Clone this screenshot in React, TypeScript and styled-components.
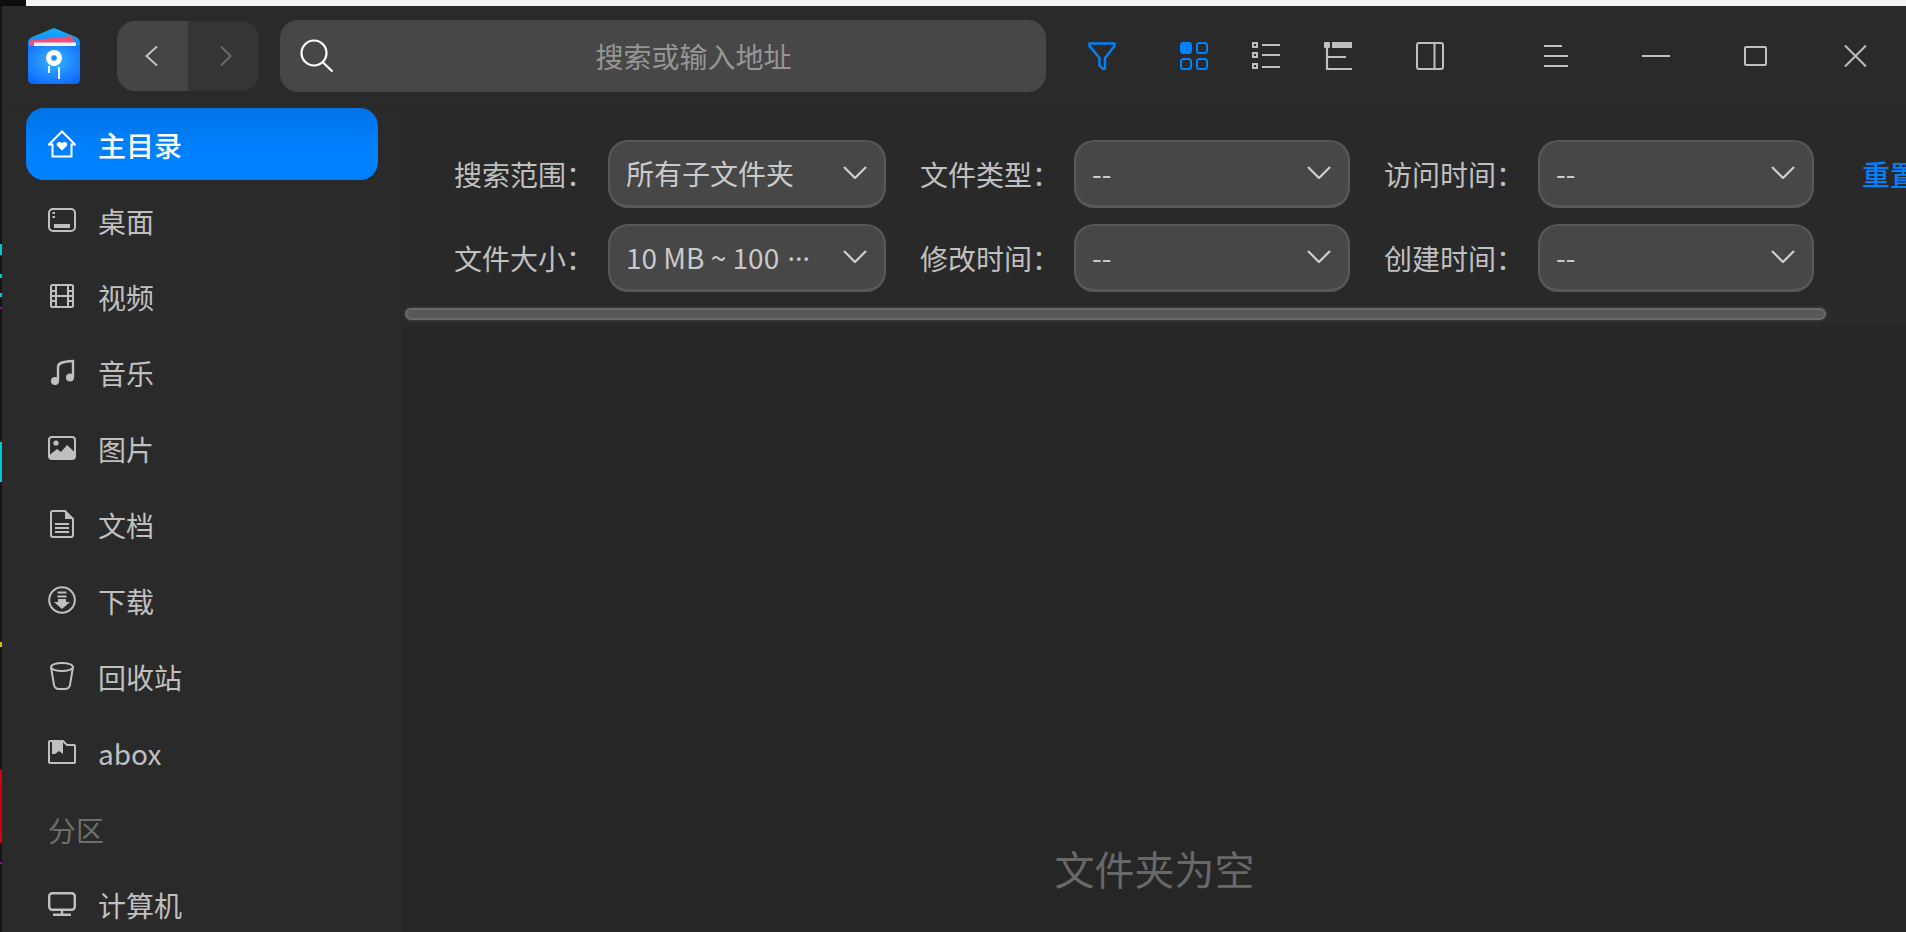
import React from "react";
import styled, { createGlobalStyle } from "styled-components";

const GlobalStyle = createGlobalStyle`
  html, body {
    margin: 0;
    padding: 0;
    background: #111;
  }
  * {
    box-sizing: border-box;
  }
`;

const FONT = `"Noto Sans CJK SC", "Noto Sans", sans-serif`;
const BLUE = "#0081ff";
const GREY = "#c0c0c0";

const LogoIcon = () => (
  <svg width="52" height="56" viewBox="0 0 52 56">
    <defs>
      <linearGradient id="logoTop" x1="0" y1="0" x2="0" y2="1">
        <stop offset="0" stopColor="#12b0f5" />
        <stop offset="1" stopColor="#1a7fff" />
      </linearGradient>
      <radialGradient id="logoBody" cx="0.5" cy="0.4" r="0.75">
        <stop offset="0" stopColor="#37b4ff" />
        <stop offset="1" stopColor="#0a62fb" />
      </radialGradient>
    </defs>
    <path d="M26 0 L48 9 Q52 11 52 15 V20 H0 V15 Q0 11 4 9 Z" fill="url(#logoTop)" />
    <path d="M1 14 Q2 12 5 12 L44 8 L47 18 H1 Z" fill="#ef4f78" />
    <rect x="6" y="14.5" width="42" height="4" fill="#f4f4f4" />
    <path d="M0 18 H52 V51 Q52 56 47 56 H5 Q0 56 0 51 Z" fill="url(#logoBody)" />
    <circle cx="26" cy="30" r="8" fill="#fff" />
    <circle cx="26" cy="30" r="2.8" fill="#1a8cff" />
    <path d="M21 38 V45 M31 39 V51" stroke="#fff" strokeWidth="1.8" fill="none" />
  </svg>
);

const ChevronLeft = () => (
  <svg width="13" height="20" viewBox="0 0 13 20" fill="none" stroke={GREY} strokeWidth="2">
    <path d="M12 0.5 L1.5 10 L12 19.5" />
  </svg>
);

const ChevronRight = () => (
  <svg width="12" height="20" viewBox="0 0 12 20" fill="none" stroke="#696969" strokeWidth="2">
    <path d="M1 0.5 L10.5 10 L1 19.5" />
  </svg>
);

const SearchIcon = () => (
  <svg width="33" height="33" viewBox="0 0 33 33" fill="none" stroke="#fff" strokeWidth="2.2">
    <circle cx="14" cy="14" r="12.5" />
    <path d="M22.5 23 L32.5 32.5" />
  </svg>
);

const FilterIcon = () => (
  <svg width="28" height="28" viewBox="0 0 28 28" fill="none" stroke={BLUE} strokeWidth="2.4">
    <path d="M1.5 1.5 H26.5 V4 L17 16 V27 H15 L11.5 23.5 V16 L1.5 4 Z" strokeLinejoin="round" />
  </svg>
);

const GridIcon = () => (
  <svg width="28" height="28" viewBox="0 0 28 28" fill="none" stroke={BLUE} strokeWidth="2">
    <rect x="0" y="0" width="12" height="12" rx="3" fill={BLUE} stroke="none" />
    <rect x="17" y="1" width="10" height="10" rx="2.5" />
    <rect x="1" y="17" width="10" height="10" rx="2.5" />
    <rect x="17" y="17" width="10" height="10" rx="2.5" />
  </svg>
);

const ListIcon = () => (
  <svg width="28" height="28" viewBox="0 0 28 28" fill="none" stroke={GREY} strokeWidth="2">
    <rect x="1" y="1" width="4" height="4" />
    <rect x="1" y="11" width="4" height="4" />
    <rect x="1" y="22" width="4" height="4" />
    <path d="M10 3 H28 M10 13 H28 M10 25 H28" />
  </svg>
);

const TreeIcon = () => (
  <svg width="28" height="28" viewBox="0 0 28 28" fill="none" stroke={GREY} strokeWidth="2.2">
    <rect x="0" y="0" width="6" height="6" rx="1" fill={GREY} stroke="none" />
    <rect x="8" y="0" width="20" height="6" fill={GREY} stroke="none" />
    <path d="M3 6 V27 H28 M3 15 H22" />
  </svg>
);

const PanelIcon = () => (
  <svg width="28" height="28" viewBox="0 0 28 28" fill="none" stroke={GREY} strokeWidth="2">
    <rect x="1" y="1" width="26" height="26" rx="2" />
    <path d="M18.5 1 V27" />
  </svg>
);

const MenuIcon = () => (
  <svg width="24" height="22" viewBox="0 0 24 22" fill="none" stroke={GREY} strokeWidth="2">
    <path d="M0 1 H18 M0 11 H24 M0 21 H24" />
  </svg>
);

const MinIcon = () => (
  <svg width="28" height="2" viewBox="0 0 28 2" fill="none" stroke={GREY} strokeWidth="2">
    <path d="M0 1 H28" />
  </svg>
);

const MaxIcon = () => (
  <svg width="23" height="20" viewBox="0 0 23 20" fill="none" stroke={GREY} strokeWidth="2">
    <rect x="1" y="1" width="21" height="18" rx="1" />
  </svg>
);

const CloseIcon = () => (
  <svg width="23" height="22" viewBox="0 0 23 22" fill="none" stroke={GREY} strokeWidth="2">
    <path d="M1 0.5 L22 21.5 M22 0.5 L1 21.5" />
  </svg>
);

const SelectChevron = () => (
  <svg width="24" height="13" viewBox="0 0 24 13" fill="none" stroke="#cfcfcf" strokeWidth="2.2">
    <path d="M1 1 L12 12 L23 1" />
  </svg>
);

const HomeIcon = () => (
  <svg width="28" height="28" viewBox="0 0 28 28" fill="none" stroke="#fff" strokeWidth="2">
    <path d="M1 14.5 L14 1.5 L27 14.5 H23.5 V26.5 H4.5 V14.5 Z" />
    <path d="M14 20.5 L9 15.8 C7.6 12.6 12 10.6 14 13.6 C16 10.6 20.4 12.6 19 15.8 Z" fill="#fff" stroke="none" />
  </svg>
);

const DesktopIcon = () => (
  <svg width="28" height="24" viewBox="0 0 28 24" fill="none" stroke={GREY} strokeWidth="2">
    <rect x="1" y="1" width="26" height="22" rx="4" />
    <path d="M4.5 5 H7 M4.5 9 H7" />
    <rect x="6" y="16" width="16" height="4" fill={GREY} stroke="none" />
  </svg>
);

const VideoIcon = () => (
  <svg width="28" height="24" viewBox="0 0 28 24" fill="none" stroke={GREY} strokeWidth="2">
    <rect x="3" y="1" width="22" height="22" rx="1.5" />
    <path d="M8 1 V23 M20 1 V23 M3 7 H8 M3 12 H8 M3 17 H8 M20 7 H25 M20 12 H25 M20 17 H25 M8 12 H20" />
  </svg>
);

const MusicIcon = () => (
  <svg width="28" height="26" viewBox="0 0 28 26" fill="none">
    <circle cx="7" cy="22" r="4" fill={GREY} />
    <circle cx="22" cy="18.5" r="4" fill={GREY} />
    <path d="M10 22 V8 C10 4 14 2.5 25 2 V18" stroke={GREY} strokeWidth="2.4" />
  </svg>
);

const PictureIcon = () => (
  <svg width="28" height="24" viewBox="0 0 28 24" fill="none">
    <rect x="1" y="1" width="26" height="22" rx="3" stroke={GREY} strokeWidth="2" />
    <circle cx="8" cy="7" r="2.6" fill={GREY} />
    <path d="M1.5 19 L9 13 L13 16 L19 9 L26.5 16 V20 Q26.5 23 24 23 H4 Q1.5 23 1.5 20 Z" fill={GREY} />
  </svg>
);

const DocIcon = () => (
  <svg width="28" height="28" viewBox="0 0 28 28" fill="none">
    <path d="M3 3 Q3 1 5 1 H17 L25 9 V25 Q25 27 23 27 H5 Q3 27 3 25 Z" stroke={GREY} strokeWidth="2" />
    <path d="M17 1 V9 H25 Z" fill={GREY} />
    <path d="M7 14 H21 M7 18 H21 M7 22 H21" stroke={GREY} strokeWidth="2" />
  </svg>
);

const DownloadIcon = () => (
  <svg width="28" height="28" viewBox="0 0 28 28" fill="none">
    <circle cx="14" cy="14" r="12.8" stroke={GREY} strokeWidth="2" />
    <path d="M9.5 6.5 H18.5 M9.5 10.5 H18.5" stroke={GREY} strokeWidth="2" />
    <path d="M10 13 H18 V16 H22 L14 23 L6 16 H10 Z" fill={GREY} />
  </svg>
);

const TrashIcon = () => (
  <svg width="28" height="28" viewBox="0 0 28 28" fill="none" stroke={GREY} strokeWidth="2">
    <ellipse cx="14" cy="5" rx="11" ry="4" />
    <path d="M3 5 L6 23 Q7 27 11 27 H17 Q21 27 22 23 L25 5" />
  </svg>
);

const FolderIcon = () => (
  <svg width="28" height="24" viewBox="0 0 28 24" fill="none">
    <path d="M1 2 Q1 1 2 1 H15 L19 5 H26 Q27 5 27 6 V22 Q27 23 26 23 H2 Q1 23 1 22 Z" stroke={GREY} strokeWidth="2" />
    <path d="M4 1 H15 V14 L11 11 L7 14 L4 14 Z" fill={GREY} />
  </svg>
);

const ComputerIcon = () => (
  <svg width="28" height="24" viewBox="0 0 28 24" fill="none" stroke={GREY} strokeWidth="2.4">
    <rect x="1.2" y="1.2" width="25.6" height="16.6" rx="3" />
    <path d="M14 18 V22.5 M5 22.8 H23" />
  </svg>
);

const navItems: { label: string; icon: React.ReactNode }[] = [
  { label: "桌面", icon: <DesktopIcon /> },
  { label: "视频", icon: <VideoIcon /> },
  { label: "音乐", icon: <MusicIcon /> },
  { label: "图片", icon: <PictureIcon /> },
  { label: "文档", icon: <DocIcon /> },
  { label: "下载", icon: <DownloadIcon /> },
  { label: "回收站", icon: <TrashIcon /> },
  { label: "abox", icon: <FolderIcon /> },
];

type Filter = { label: string; value: string; clipped?: boolean };

const topFilters: Filter[] = [
  { label: "搜索范围：", value: "所有子文件夹" },
  { label: "文件类型：", value: "--" },
  { label: "访问时间：", value: "--" },
];

const bottomFilters: Filter[] = [
  { label: "文件大小：", value: "10 MB ~ 100 ", clipped: true },
  { label: "修改时间：", value: "--" },
  { label: "创建时间：", value: "--" },
];

const FilterField = ({ label, value, clipped }: Filter) => (
  <Field>
    <FieldLabel>{label}</FieldLabel>
    <Select>
      <SelectValue>
        {value}
        {clipped && <Dots>···</Dots>}
      </SelectValue>
      <SelectChevron />
    </Select>
  </Field>
);

const App = () => {
  return (
    <Page>
      <GlobalStyle />
      <TopStrip>
        <TopStripDark />
      </TopStrip>
      <Body>
        <DesktopEdge />
        <Window>
          <TitleBar>
            <LogoSlot>
              <LogoIcon />
            </LogoSlot>
            <NavGroup>
              <NavButton $active>
                <ChevronLeft />
              </NavButton>
              <NavButton>
                <ChevronRight />
              </NavButton>
            </NavGroup>
            <SearchBar>
              <SearchIcon />
              <SearchText>搜索或输入地址</SearchText>
            </SearchBar>
            <ToolIcon $gap={42}><FilterIcon /></ToolIcon>
            <ToolIcon $gap={64}><GridIcon /></ToolIcon>
            <ToolIcon $gap={44}><ListIcon /></ToolIcon>
            <ToolIcon $gap={44}><TreeIcon /></ToolIcon>
            <ToolIcon $gap={64}><PanelIcon /></ToolIcon>
            <ToolIcon $gap={100}><MenuIcon /></ToolIcon>
            <ToolIcon $gap={74}><MinIcon /></ToolIcon>
            <ToolIcon $gap={74}><MaxIcon /></ToolIcon>
            <ToolIcon $gap={77}><CloseIcon /></ToolIcon>
          </TitleBar>
          <Main>
            <Sidebar>
              <NavItem $active>
                <NavIcon><HomeIcon /></NavIcon>
                主目录
              </NavItem>
              {navItems.map((item) => (
                <NavItem key={item.label}>
                  <NavIcon>{item.icon}</NavIcon>
                  {item.label}
                </NavItem>
              ))}
              <SectionTitle>分区</SectionTitle>
              <NavItem>
                <NavIcon><ComputerIcon /></NavIcon>
                计算机
              </NavItem>
            </Sidebar>
            <Content>
              <FilterPanel>
                <FilterGrid>
                  {topFilters.map((f) => (
                    <FilterField key={f.label} {...f} />
                  ))}
                  <ResetLink>重置</ResetLink>
                  {bottomFilters.map((f) => (
                    <FilterField key={f.label} {...f} />
                  ))}
                </FilterGrid>
                <ScrollBar />
              </FilterPanel>
              <EmptyArea>
                <EmptyText>文件夹为空</EmptyText>
              </EmptyArea>
            </Content>
          </Main>
        </Window>
      </Body>
    </Page>
  );
};

const Page = styled.div`
  width: 1906px;
  height: 932px;
  overflow: hidden;
  display: flex;
  flex-direction: column;
  font-family: ${FONT};
  color: ${GREY};
`;

const TopStrip = styled.div`
  height: 6px;
  flex-shrink: 0;
  display: flex;
  background: #f4f4f4;
`;

const TopStripDark = styled.div`
  width: 26px;
  background: #0d0d0d;
`;

const Body = styled.div`
  flex: 1;
  display: flex;
  min-height: 0;
`;

const DesktopEdge = styled.div`
  width: 2px;
  flex-shrink: 0;
  background: linear-gradient(
    to bottom,
    #141414 0,
    #141414 238px,
    #00c8d0 238px,
    #00c8d0 249px,
    #141414 249px,
    #141414 268px,
    #00c8d0 268px,
    #00c8d0 272px,
    #141414 272px,
    #141414 287px,
    #00c8d0 287px,
    #00c8d0 291px,
    #141414 291px,
    #141414 301px,
    #a000a0 301px,
    #a000a0 303px,
    #141414 303px,
    #141414 436px,
    #00c8d0 436px,
    #00c8d0 476px,
    #141414 476px,
    #141414 636px,
    #c8c800 636px,
    #c8c800 641px,
    #141414 641px,
    #141414 764px,
    #d80010 764px,
    #d80010 837px,
    #141414 837px,
    #141414 856px,
    #a000a0 856px,
    #a000a0 858px,
    #141414 858px
  );
`;

const Window = styled.div`
  flex: 1;
  min-width: 0;
  display: flex;
  flex-direction: column;
  background: #2a2a2a;
`;

const TitleBar = styled.div`
  height: 100px;
  flex-shrink: 0;
  display: flex;
  align-items: center;
  padding-left: 26px;
  background: #2a2a2a;
  border-bottom: 1px solid #282828;
`;

const LogoSlot = styled.div`
  display: flex;
  width: 52px;
  height: 56px;
`;

const NavGroup = styled.div`
  display: flex;
  width: 142px;
  height: 70px;
  margin-left: 37px;
  border-radius: 18px;
  overflow: hidden;
`;

const NavButton = styled.div<{ $active?: boolean }>`
  width: 71px;
  display: flex;
  align-items: center;
  justify-content: center;
  padding: ${(p) => (p.$active ? "0 3px 0 0" : "0 0 0 5px")};
  background: ${(p) => (p.$active ? "#454545" : "#353535")};
`;

const SearchBar = styled.div`
  width: 766px;
  height: 72px;
  margin-left: 21px;
  display: flex;
  align-items: center;
  padding: 0 0 0 20px;
  border-radius: 18px;
  background: #474747;
`;

const SearchText = styled.div`
  flex: 1;
  padding-left: 8px;
  text-align: center;
  font-size: 28px;
  color: #969696;
`;

const ToolIcon = styled.div<{ $gap: number }>`
  display: flex;
  flex-shrink: 0;
  margin-left: ${(p) => p.$gap}px;
`;

const Main = styled.div`
  flex: 1;
  min-height: 0;
  display: flex;
`;

const Sidebar = styled.div`
  width: 401px;
  flex-shrink: 0;
  padding: 2px 25px 0 24px;
  display: flex;
  flex-direction: column;
  gap: 4px;
  background: #2a2a2a;
`;

const NavItem = styled.div<{ $active?: boolean }>`
  height: 72px;
  flex-shrink: 0;
  display: flex;
  align-items: center;
  padding: 2px 0 0 22px;
  border-radius: 18px;
  font-size: 28px;
  font-weight: ${(p) => (p.$active ? 500 : 400)};
  color: ${(p) => (p.$active ? "#fff" : GREY)};
  background: ${(p) => (p.$active ? `linear-gradient(to bottom, #0073e6, ${BLUE} 60%)` : "transparent")};
`;

const NavIcon = styled.span`
  width: 28px;
  margin: -2px 22px 0 0;
  display: flex;
  justify-content: center;
`;

const SectionTitle = styled.div`
  height: 72px;
  flex-shrink: 0;
  display: flex;
  align-items: center;
  padding: 4px 0 0 22px;
  font-size: 28px;
  color: #6e6e6e;
`;

const Content = styled.div`
  flex: 1;
  min-width: 0;
  display: flex;
  flex-direction: column;
  background: #262626;
`;

const FilterPanel = styled.div`
  flex-shrink: 0;
  padding: 34px 0 6px 2px;
  background: #292929;
`;

const FilterGrid = styled.div`
  display: grid;
  grid-template-columns: 432px 430px 430px auto;
  column-gap: 34px;
  row-gap: 16px;
  margin-left: 49px;
  white-space: nowrap;
`;

const Field = styled.div`
  display: grid;
  grid-template-columns: 154px minmax(0, 1fr);
  align-items: center;
`;

const FieldLabel = styled.span`
  font-size: 28px;
`;

const Select = styled.div`
  height: 68px;
  display: flex;
  align-items: center;
  justify-content: space-between;
  padding: 0 17px 2px 16px;
  border: 2px solid #585858;
  border-bottom-width: 3px;
  border-radius: 20px;
  background: #474747;
`;

const SelectValue = styled.span`
  font-size: 28px;
  color: #cacaca;
  white-space: pre;
`;

const Dots = styled.span`
  font-family: "Noto Sans", sans-serif;
  margin-left: 2px;
`;

const ResetLink = styled.span`
  margin-left: 14px;
  font-size: 28px;
  line-height: 68px;
  font-weight: 500;
  color: ${BLUE};
`;

const ScrollBar = styled.div`
  width: 1421px;
  height: 12px;
  margin-top: 16px;
  border: 2px solid #6a6a6a;
  border-radius: 6px;
  background: #585858;
  box-shadow: 0 0 0 2px #333;
`;

const EmptyArea = styled.div`
  flex: 1;
  display: flex;
  align-items: flex-end;
  justify-content: center;
  padding-bottom: 35px;
`;

const EmptyText = styled.div`
  font-size: 40px;
  color: #686868;
`;

export default App;
